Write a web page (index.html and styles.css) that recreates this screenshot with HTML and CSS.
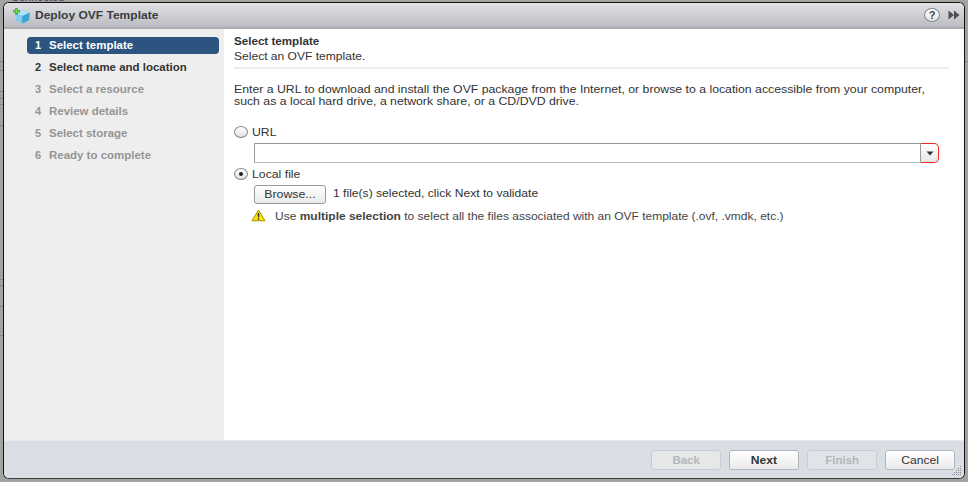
FILE: index.html
```html
<!DOCTYPE html>
<html lang="en">
<head>
<meta charset="utf-8">
<title>Deploy OVF Template</title>
<link rel="stylesheet" href="styles.css">
</head>
<body>
<div class="backdrop"><span class="behind">Connected</span></div>
<div class="dialog">
  <header class="titlebar">
    <svg class="vm-icon" width="18" height="16" viewBox="0 0 18 16">
      <path d="M2.5 5.5 9.5 2 16.5 4.7 16 12 9.5 15.5 3.2 12.3Z" fill="#55b5df"/>
      <path d="M2.5 5.5 9.5 2 16.5 4.7 9.3 8Z" fill="#b5e5f5"/>
      <path d="M2.5 5.5 9.3 8 9.5 15.5 3.2 12.3Z" fill="#83cceb"/>
      <path d="M9.3 8 16.5 4.7 16 12 9.5 15.5Z" fill="#3aa3d4"/>
      <path d="M3.5 0.2v6.2M0.3 3.3h6.5" stroke="#2b9a28" stroke-width="2.4"/>
      <path d="M3.5 1v4.6M1.1 3.3h4.9" stroke="#75df50" stroke-width="1.2"/>
    </svg>
    <h1 class="title"><span class="wide">Deploy OVF Template</span></h1>
    <span class="help">?</span>
    <svg class="more" width="12" height="10" viewBox="0 0 12 10"><path d="M0.5 0.5 6 5 0.5 9.5ZM6 0.5 11.5 5 6 9.5Z" fill="#4d4f53"/></svg>
  </header>
  <div class="content">
    <ol class="steps">
      <li class="step current"><b>1</b><span>Select template</span></li>
      <li class="step ready"><b>2</b><span>Select name and location</span></li>
      <li class="step"><b>3</b><span>Select a resource</span></li>
      <li class="step"><b>4</b><span>Review details</span></li>
      <li class="step"><b>5</b><span>Select storage</span></li>
      <li class="step"><b>6</b><span>Ready to complete</span></li>
    </ol>
    <main class="page">
      <div class="heading">
        <h2>Select template</h2>
        <p class="wide subtitle">Select an OVF template.</p>
      </div>
      <p class="wide intro">Enter a URL to download and install the OVF package from the Internet, or browse to a location accessible from your computer,<br>such as a local hard drive, a network share, or a CD/DVD drive.</p>
      <div class="option url"><i class="radio"></i><span class="wide">URL</span></div>
      <div class="combo"><div class="field"></div><div class="drop"><svg width="8" height="5" viewBox="0 0 8 5"><path d="M0.5 0.5h7L4 4.5Z" fill="#333"/></svg></div></div>
      <div class="option local"><i class="radio on"></i><span class="wide">Local file</span></div>
      <div class="filerow"><div class="button browse"><span>Browse...</span></div><span class="wide chosen">1 file(s) selected, click Next to validate</span></div>
      <div class="hint">
        <svg width="15" height="13" viewBox="0 0 15 13"><path d="M7.5 1 14 11.8H1Z" fill="#ffe500" stroke="#a88d00" stroke-linejoin="round"/><path d="M7.5 4v4.2M7.5 9.2v1.5" stroke="#333" stroke-width="1.5"/></svg>
        <span class="wide hinttext">Use <b>multiple selection</b> to select all the files associated with an OVF template (.ovf, .vmdk, etc.)</span>
      </div>
    </main>
  </div>
  <footer class="footer">
    <div class="button off"><span>Back</span></div>
    <div class="button next"><span>Next</span></div>
    <div class="button off pale"><span>Finish</span></div>
    <div class="button"><span>Cancel</span></div>
    <svg class="grip" width="10" height="9" viewBox="0 0 10 9"><path d="M8 0h1v1h-1zM6 2h1v1h-1zM8 2h1v1h-1zM4 4h1v1h-1zM6 4h1v1h-1zM8 4h1v1h-1zM2 6h1v1h-1zM4 6h1v1h-1zM6 6h1v1h-1zM8 6h1v1h-1zM0 8h1v1h-1zM2 8h1v1h-1zM4 8h1v1h-1zM6 8h1v1h-1zM8 8h1v1h-1z" fill="#858a92"/></svg>
  </footer>
</div>
</body>
</html>
```
FILE: styles.css
```css
* { box-sizing: border-box; margin: 0; padding: 0; }
body {
  width: 968px; height: 482px; overflow: hidden; padding: 2px 3px 3px;
  background: #a3a3a2;
  font: 11px/12px "Liberation Sans", Arial, sans-serif; color: #333;
}
.backdrop {
  position: absolute; inset: 0; overflow: hidden; z-index: -1;
  background:
    linear-gradient(#858583, #858583) 0 61px / 100% 1px no-repeat,
    linear-gradient(#858583, #858583) 0 70px / 3px 1px no-repeat,
    linear-gradient(#858583, #858583) 0 91px / 3px 1px no-repeat,
    linear-gradient(#858583, #858583) 0 98px / 3px 1px no-repeat,
    linear-gradient(#858583, #858583) 0 104px / 3px 1px no-repeat,
    linear-gradient(#858583, #858583) 0 125px / 3px 1px no-repeat,
    linear-gradient(#858583, #858583) 0 279px / 3px 1px no-repeat,
    linear-gradient(#858583, #858583) 0 285px / 3px 1px no-repeat,
    linear-gradient(#858583, #858583) 0 306px / 3px 1px no-repeat,
    linear-gradient(#858583, #858583) 0 335px / 3px 1px no-repeat;
}
.behind { position: absolute; left: 11px; top: -9px; color: #444; }
.wide { display: inline-block; white-space: nowrap; transform: scaleX(1.115); transform-origin: 0 50%; }
.dialog {
  width: 962px; height: 477px; overflow: hidden;
  display: flex; flex-direction: column;
  border: 1px solid #111; border-bottom-color: #3c3f42; border-radius: 6px; background: #fff;
}
.titlebar {
  height: 26px; flex: none; display: flex; align-items: center; padding: 0 4px 0 9px;
  background: linear-gradient(#e0e1e4, #bcbdc2); border-bottom: 2px solid #adadb1;
}
.vm-icon { margin-top: 1px; }
.title { font-size: 11px; margin-left: 4px; flex: 1; color: #3c3c3c; }
.title .wide { transform: scaleX(1.093); }
.help {
  width: 16px; height: 14px; border: 1px solid #85878a; border-radius: 50%;
  background: linear-gradient(#fff, #e3e4e6); font: bold 11px/12px "Liberation Sans", Arial, sans-serif;
  text-align: center; color: #444; margin-right: 8px;
}
.content { flex: 1; display: flex; min-height: 0; }
.steps { width: 220px; flex: none; background: #eee; list-style: none; padding: 8px 5px 0 23px; }
.step {
  height: 17px; margin-bottom: 5px; display: flex; align-items: center; padding: 0 0 2px 8px;
  font-weight: bold; color: #959595; border-radius: 4px;
}
.step b { width: 14px; flex: none; }
.step span { transform: scaleX(1.043); transform-origin: 0 50%; }
.step.current { background: #2b5480; color: #fff; }
.step.ready { color: #333; }
.page { flex: 1; padding: 6px 15px 0 10px; }
.heading { height: 34px; border-bottom: 2px solid #ededed; }
.heading h2 { font-size: 11px; line-height: 13px; transform: scaleX(1.056); transform-origin: 0 50%; }
.subtitle { line-height: 16px; transform: scaleX(1.096); }
.intro { display: block; width: 600px; margin-top: 14px; }
.option { display: flex; align-items: center; gap: 4px; height: 14px; }
.url { margin-top: 18px; }
.radio {
  width: 14px; height: 12px; border: 1px solid #858585; border-radius: 50%;
  background: linear-gradient(#fff, #e2e2e2); display: flex; align-items: center; justify-content: center;
}
.radio.on::after { content: ""; width: 4px; height: 4px; border-radius: 50%; background: #222; }
.combo { display: flex; height: 20px; margin: 4px 10px 0 20px; }
.field { flex: 1; border: 1px solid #999; border-bottom-color: #bbb; }
.drop {
  width: 18px; border: 1px solid #f22; border-left: 0; border-radius: 0 5px 5px 0;
  background: linear-gradient(#fff, #e8e8e8); display: flex; align-items: center; justify-content: center;
}
.local { margin-top: 4px; }
.filerow { display: flex; align-items: center; gap: 7px; margin: 4px 0 0 20px; }
.chosen { transform: scaleX(1.1); margin-top: -4px; }
.button {
  width: 70px; height: 20px; border: 1px solid #b2b5b9; border-radius: 3px;
  background: linear-gradient(#fff, #eaeaea); display: flex; align-items: center; justify-content: center;
}
.button span { transform: scaleX(1.1); }
.browse { width: 72px; height: 19px; border-color: #999; padding-bottom: 1px; }
.browse span { transform: scaleX(1.12); }
.hint { display: flex; align-items: center; gap: 9px; margin: 5px 0 0 17px; color: #444; }
.hinttext { transform: scaleX(1.09); }
.footer {
  height: 38px; flex: none; position: relative; display: flex; gap: 8px; padding: 9px 9px 0 0;
  justify-content: flex-end; background: #d9dee5; border-top: 1px solid #e6e9ed;
}
.button.off { background: #e6e7e8; border-color: #c8cbcf; color: #b4b6b9; font-weight: bold; }
.button.pale { background: #e0e4e8; }
.button.off span { transform: scaleX(1.04); }
.next { font-weight: bold; }
.grip { position: absolute; right: 2px; bottom: 3px; }
```
